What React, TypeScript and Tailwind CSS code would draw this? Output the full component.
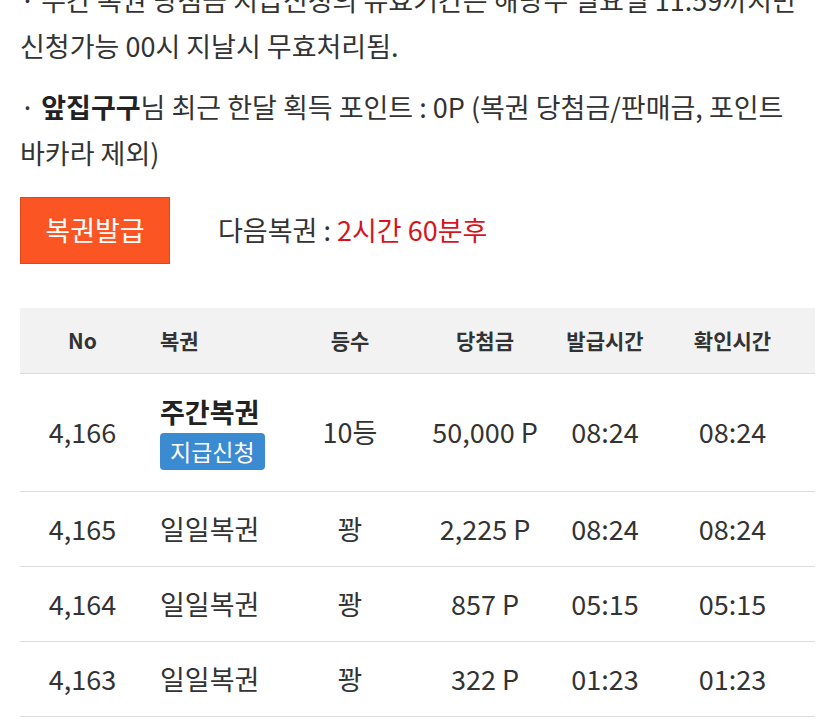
const rows = [
  { no: '4,165', name: '일일복권', rank: '꽝', prize: '2,225 P', issued: '08:24', checked: '08:24' },
  { no: '4,164', name: '일일복권', rank: '꽝', prize: '857 P', issued: '05:15', checked: '05:15' },
  { no: '4,163', name: '일일복권', rank: '꽝', prize: '322 P', issued: '01:23', checked: '01:23' },
];

const cols = 'grid grid-cols-[125px_145px_120px_150px_90px_165px]';

export default function App() {
  return (
    <div
      className="w-[835px] h-[727px] overflow-hidden bg-white text-[#333]"
      style={{ fontFamily: '"Noto Sans CJK KR", "Noto Sans", sans-serif' }}
    >
      <div className="px-5 mt-[-23px] text-[27px] leading-[46px] whitespace-nowrap">
        <p>
          · 주간 복권 당첨금 지급신청의 유효기간은 해당주 일요일 11:59까지만
          <br />
          신청가능 00시 지날시 무효처리됨.
        </p>
        <p className="mt-[15px]">
          · <b className="font-bold text-[#222]">앞집구구</b>님 최근 한달 획득 포인트 : 0P (복권 당첨금/판매금, 포인트
          <br />
          바카라 제외)
        </p>
      </div>

      <div className="flex items-center px-5 mt-[21px]">
        <button className="w-[150px] h-[67px] bg-[#fb5524] border border-[#e0481c] text-white text-[27px]">
          복권발급
        </button>
        <div className="ml-[48px] text-[27px]">
          다음복권 : <span className="text-[#d7141c]">2시간 60분후</span>
        </div>
      </div>

      <div className="mx-5 mt-[44px]">
        <div className={`${cols} h-[66px] items-center bg-[#f2f2f2] border-b border-[#dcdcdc] text-[21px] font-bold text-[#333]`}>
          <div className="text-center">No</div>
          <div className="pl-[15px]">복권</div>
          <div className="text-center">등수</div>
          <div className="text-center">당첨금</div>
          <div className="text-center">발급시간</div>
          <div className="text-center">확인시간</div>
        </div>

        <div className={`${cols} h-[118px] items-center border-b border-[#dcdcdc] text-[27px]`}>
          <div className="text-center">4,166</div>
          <div className="pl-[15px] flex flex-col items-start">
            <span className="font-bold text-[#222] leading-[34px]">주간복권</span>
            <span className="mt-[4px] px-[10px] h-[37px] flex items-center rounded-[4px] bg-[#3b8bd2] text-white text-[23px]">
              지급신청
            </span>
          </div>
          <div className="text-center">10등</div>
          <div className="text-center">50,000 P</div>
          <div className="text-center">08:24</div>
          <div className="text-center">08:24</div>
        </div>

        {rows.map((r) => (
          <div
            key={r.no}
            className={`${cols} h-[75px] items-center border-b border-[#dcdcdc] text-[27px]`}
          >
            <div className="text-center">{r.no}</div>
            <div className="pl-[15px]">{r.name}</div>
            <div className="text-center">{r.rank}</div>
            <div className="text-center">{r.prize}</div>
            <div className="text-center">{r.issued}</div>
            <div className="text-center">{r.checked}</div>
          </div>
        ))}
      </div>
    </div>
  );
}
